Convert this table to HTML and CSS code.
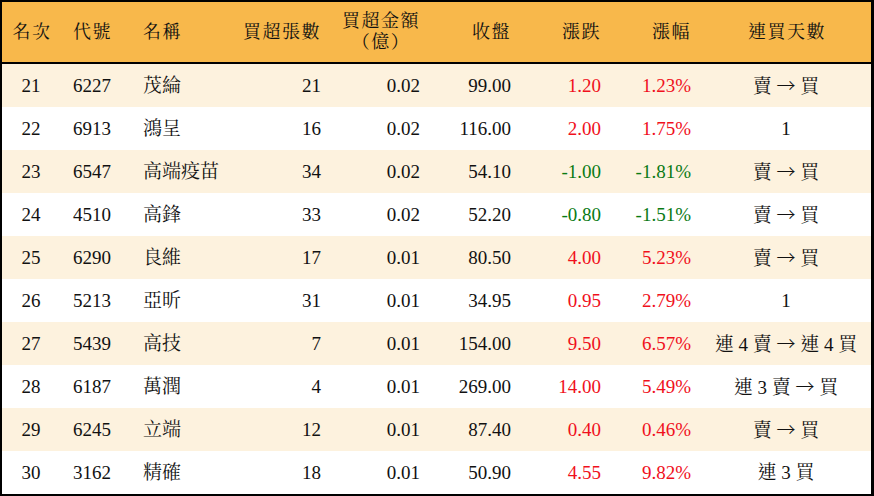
FILE: index.html
```html
<!DOCTYPE html>
<html lang="zh-Hant">
<head>
<meta charset="utf-8">
<title>買超排行</title>
<link rel="stylesheet" href="styles.css">
</head>
<body>
<table class="rank">
  <colgroup>
    <col class="w1"><col class="w2"><col class="w3"><col class="w4"><col class="w5"><col class="w6"><col class="w7"><col class="w8"><col class="w9">
  </colgroup>
  <thead>
    <tr>
      <th class="c">名次</th>
      <th class="l">代號</th>
      <th class="l">名稱</th>
      <th class="r">買超張數</th>
      <th class="r"><span class="two">買超金額<br>（億）</span></th>
      <th class="r">收盤</th>
      <th class="r">漲跌</th>
      <th class="r">漲幅</th>
      <th class="c">連買天數</th>
    </tr>
  </thead>
  <tbody>
    <tr class="alt"><td class="c">21</td><td class="l">6227</td><td class="l">茂綸</td><td class="r">21</td><td class="r">0.02</td><td class="r">99.00</td><td class="r up">1.20</td><td class="r up">1.23%</td><td class="c">賣 <span class="arr">→</span> 買</td></tr>
    <tr><td class="c">22</td><td class="l">6913</td><td class="l">鴻呈</td><td class="r">16</td><td class="r">0.02</td><td class="r">116.00</td><td class="r up">2.00</td><td class="r up">1.75%</td><td class="c">1</td></tr>
    <tr class="alt"><td class="c">23</td><td class="l">6547</td><td class="l">高端疫苗</td><td class="r">34</td><td class="r">0.02</td><td class="r">54.10</td><td class="r down">-1.00</td><td class="r down">-1.81%</td><td class="c">賣 <span class="arr">→</span> 買</td></tr>
    <tr><td class="c">24</td><td class="l">4510</td><td class="l">高鋒</td><td class="r">33</td><td class="r">0.02</td><td class="r">52.20</td><td class="r down">-0.80</td><td class="r down">-1.51%</td><td class="c">賣 <span class="arr">→</span> 買</td></tr>
    <tr class="alt"><td class="c">25</td><td class="l">6290</td><td class="l">良維</td><td class="r">17</td><td class="r">0.01</td><td class="r">80.50</td><td class="r up">4.00</td><td class="r up">5.23%</td><td class="c">賣 <span class="arr">→</span> 買</td></tr>
    <tr><td class="c">26</td><td class="l">5213</td><td class="l">亞昕</td><td class="r">31</td><td class="r">0.01</td><td class="r">34.95</td><td class="r up">0.95</td><td class="r up">2.79%</td><td class="c">1</td></tr>
    <tr class="alt"><td class="c">27</td><td class="l">5439</td><td class="l">高技</td><td class="r">7</td><td class="r">0.01</td><td class="r">154.00</td><td class="r up">9.50</td><td class="r up">6.57%</td><td class="c">連 4 賣 <span class="arr">→</span> 連 4 買</td></tr>
    <tr><td class="c">28</td><td class="l">6187</td><td class="l">萬潤</td><td class="r">4</td><td class="r">0.01</td><td class="r">269.00</td><td class="r up">14.00</td><td class="r up">5.49%</td><td class="c">連 3 賣 <span class="arr">→</span> 買</td></tr>
    <tr class="alt"><td class="c">29</td><td class="l">6245</td><td class="l">立端</td><td class="r">12</td><td class="r">0.01</td><td class="r">87.40</td><td class="r up">0.40</td><td class="r up">0.46%</td><td class="c">賣 <span class="arr">→</span> 買</td></tr>
    <tr><td class="c">30</td><td class="l">3162</td><td class="l">精確</td><td class="r">18</td><td class="r">0.01</td><td class="r">50.90</td><td class="r up">4.55</td><td class="r up">9.82%</td><td class="c">連 3 買</td></tr>
  </tbody>
</table>
</body>
</html>
```
FILE: styles.css
```css
html, body {
  margin: 0;
  padding: 0;
  background: #fff;
}
.rank {
  width: 874px;
  table-layout: fixed;
  border-collapse: separate;
  border-spacing: 0;
  border-style: solid;
  border-color: #000;
  border-width: 2px 3px 2px 2px;
  font-family: "Liberation Serif", "Noto Serif CJK TC", "Noto Sans CJK TC", serif;
  font-size: 19px;
  color: #111;
}
.w1 { width: 58px; }
.w2 { width: 70px; }
.w3 { width: 110px; }
.w4 { width: 91px; }
.w5 { width: 99px; }
.w6 { width: 91px; }
.w7 { width: 90px; }
.w8 { width: 90px; }
.w9 { width: 170px; }

.rank th {
  background: #f8b84b;
  height: 60px;
  padding: 0 10px 0 0;
  border-bottom: 2px solid #000;
  font-weight: normal;
  font-size: 18px;
  letter-spacing: 1.5px;
  line-height: 21px;
  white-space: nowrap;
}
.rank td {
  height: 43px;
  padding: 0 10px 0 0;
  white-space: nowrap;
  line-height: 22px;
}
.rank .l { text-align: left; padding-left: 13px; padding-right: 0; }
.rank .r { text-align: right; }
.rank .c { text-align: center; padding: 0; }
.rank th.c { padding-left: 2px; }
.two {
  display: inline-block;
  text-align: center;
}
.arr {
  font-family: "Noto Sans CJK TC", "DejaVu Sans", sans-serif;
  font-weight: 300;
  font-size: 19px;
}
.rank tr.alt td { background: #fdf2de; }
.up { color: #f0101c; }
.down { color: #0a7a14; }
```
